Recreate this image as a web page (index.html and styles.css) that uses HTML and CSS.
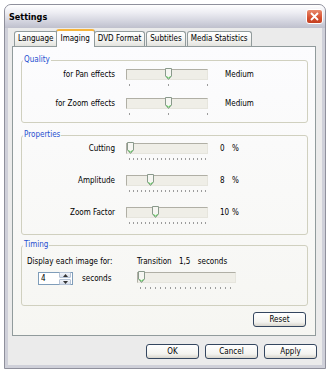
FILE: index.html
```html
<!DOCTYPE html>
<html lang="en">
<head>
<meta charset="UTF-8" />
<meta name="viewport" content="width=device-width, initial-scale=1.0">
<title>Settings</title>
<link rel="stylesheet" href="styles.css">
</head>
<body>
<div class="window">
  <div class="titlebar">
    <span class="title">Settings</span>
    <button class="close" title="Close">
      <svg width="9" height="9" viewBox="0 0 9 9"><path d="M1 1L8 8M8 1L1 8" stroke="#fff" stroke-width="1.8"/></svg>
    </button>
  </div>

  <div class="dialog">
    <div class="tabs">
      <div class="tab">Language</div>
      <div class="tab active">Imaging</div>
      <div class="tab">DVD Format</div>
      <div class="tab">Subtitles</div>
      <div class="tab">Media Statistics</div>
    </div>

    <div class="panel">
      <fieldset class="group quality">
        <legend>Quality</legend>
        <div class="rows">
          <div class="row">
            <span class="lbl">for Pan effects</span>
            <div class="slider">
              <div class="track">
                <svg class="thumb" style="left:38px" width="7" height="12" viewBox="0 0 7 12"><path d="M0.5 0.5H6.5V8L3.5 11.5L0.5 8Z" fill="#f6f6f2" stroke="#8a9a8c"/><path d="M1.5 8.2L3.5 10.3L5.5 8.2" fill="none" stroke="#45c045"/></svg>
              </div>
              <div class="ticks ticks-coarse"></div>
            </div>
            <span class="val val-wide">Medium</span>
          </div>
          <div class="row">
            <span class="lbl">for Zoom effects</span>
            <div class="slider">
              <div class="track">
                <svg class="thumb" style="left:38px" width="7" height="12" viewBox="0 0 7 12"><path d="M0.5 0.5H6.5V8L3.5 11.5L0.5 8Z" fill="#f6f6f2" stroke="#8a9a8c"/><path d="M1.5 8.2L3.5 10.3L5.5 8.2" fill="none" stroke="#45c045"/></svg>
              </div>
              <div class="ticks ticks-coarse"></div>
            </div>
            <span class="val val-wide">Medium</span>
          </div>
        </div>
      </fieldset>

      <fieldset class="group properties">
        <legend>Properties</legend>
        <div class="rows">
          <div class="row">
            <span class="lbl">Cutting</span>
            <div class="slider">
              <div class="track">
                <svg class="thumb" style="left:0px" width="7" height="12" viewBox="0 0 7 12"><path d="M0.5 0.5H6.5V8L3.5 11.5L0.5 8Z" fill="#f6f6f2" stroke="#8a9a8c"/><path d="M1.5 8.2L3.5 10.3L5.5 8.2" fill="none" stroke="#45c045"/></svg>
              </div>
              <div class="ticks ticks-fine"></div>
            </div>
            <span class="val"><span class="num">0</span>%</span>
          </div>
          <div class="row">
            <span class="lbl">Amplitude</span>
            <div class="slider">
              <div class="track">
                <svg class="thumb" style="left:20px" width="7" height="12" viewBox="0 0 7 12"><path d="M0.5 0.5H6.5V8L3.5 11.5L0.5 8Z" fill="#f6f6f2" stroke="#8a9a8c"/><path d="M1.5 8.2L3.5 10.3L5.5 8.2" fill="none" stroke="#45c045"/></svg>
              </div>
              <div class="ticks ticks-fine"></div>
            </div>
            <span class="val"><span class="num">8</span>%</span>
          </div>
          <div class="row">
            <span class="lbl">Zoom Factor</span>
            <div class="slider">
              <div class="track">
                <svg class="thumb" style="left:25px" width="7" height="12" viewBox="0 0 7 12"><path d="M0.5 0.5H6.5V8L3.5 11.5L0.5 8Z" fill="#f6f6f2" stroke="#8a9a8c"/><path d="M1.5 8.2L3.5 10.3L5.5 8.2" fill="none" stroke="#45c045"/></svg>
              </div>
              <div class="ticks ticks-fine"></div>
            </div>
            <span class="val"><span class="num">10</span>%</span>
          </div>
        </div>
      </fieldset>

      <fieldset class="group timing">
        <legend>Timing</legend>
        <div class="timing-grid">
          <span class="line">Display each image for:</span>
          <span class="line">Transition <span class="sp">1,5</span> seconds</span>
          <div class="spin-row">
            <div class="spin">
              <span class="spin-val">4</span>
              <div class="spin-btns">
                <span class="spin-btn"><svg width="5" height="3" viewBox="0 0 5 3"><path d="M0 3L2.5 0L5 3Z" fill="#333"/></svg></span>
                <span class="spin-btn"><svg width="5" height="3" viewBox="0 0 5 3"><path d="M0 0L2.5 3L5 0Z" fill="#333"/></svg></span>
              </div>
            </div>
            <span>seconds</span>
          </div>
          <div class="slider slider-wide">
            <div class="track">
              <svg class="thumb" style="left:0px" width="7" height="12" viewBox="0 0 7 12"><path d="M0.5 0.5H6.5V8L3.5 11.5L0.5 8Z" fill="#f6f6f2" stroke="#8a9a8c"/><path d="M1.5 8.2L3.5 10.3L5.5 8.2" fill="none" stroke="#45c045"/></svg>
            </div>
            <div class="ticks ticks-timing"></div>
          </div>
        </div>
      </fieldset>

      <div class="panel-foot">
        <button class="btn">Reset</button>
      </div>
    </div>

    <div class="actions">
      <button class="btn">OK</button>
      <button class="btn">Cancel</button>
      <button class="btn">Apply</button>
    </div>
  </div>
</div>
</body>
</html>
```

FILE: styles.css
```css
body {
  margin: 0;
  background: #fff;
  font-family: "DejaVu Sans Condensed", "DejaVu Sans", sans-serif;
  font-stretch: condensed;
  font-size: 8px;
  color: #000;
}

.window {
  margin: 4px 0 0 4px;
  width: 322px;
  height: 365px;
  box-sizing: border-box;
  border: 1px solid #8f909c;
  border-radius: 7px 7px 0 0;
  background: #cfd0d9;
  display: flex;
  flex-direction: column;
}

.titlebar {
  height: 23px;
  display: flex;
  align-items: center;
  padding: 0 2px 0 4px;
  border-radius: 6px 6px 0 0;
  background: linear-gradient(#ffffff, #ececf2 35%, #d0d1dc 75%, #bfc0cd);
}

.title {
  flex: 1;
  font-weight: bold;
  font-size: 9px;
}

.close {
  width: 17px;
  height: 15px;
  padding: 0;
  border: 1px solid #fff;
  border-radius: 3px;
  background: linear-gradient(#e98a6d, #d5502f 60%, #c43f20);
  display: flex;
  align-items: center;
  justify-content: center;
}

.dialog {
  flex: 1;
  margin: 0 3px 3px;
  padding: 1px 6px 0 4px;
  background: #ebebeb;
  display: flex;
  flex-direction: column;
}

/* tabs */
.tabs {
  height: 17px;
  display: flex;
  align-items: flex-end;
  padding-left: 2px;
}

.tab {
  height: 15px;
  box-sizing: border-box;
  padding: 0 3px;
  line-height: 13px;
  border: 1px solid #919b9c;
  border-bottom: none;
  border-radius: 3px 3px 0 0;
  background: linear-gradient(#ffffff, #f3f3f0 60%, #e3e3de);
}

.tab + .tab {
  margin-left: 1px;
}

.tab.active {
  position: relative;
  height: 18px;
  margin: 0 -2px -1px;
  padding: 0 4px;
  line-height: 15px;
  border-top: 2px solid #f5b43c;
  background: #fcfcfe;
}

.panel {
  height: 290px;
  box-sizing: border-box;
  padding: 8px 7px 0 8px;
  border: 1px solid #919b9c;
  background: linear-gradient(#fcfcfe, #f6f6f2);
  display: flex;
  flex-direction: column;
}

/* group boxes */
.group {
  margin: 0;
  padding: 4px 6px 7px 5px;
  border: 1px solid #d0d0bf;
  border-radius: 3px;
}

.group legend {
  margin-left: -4px;
  padding: 0 1px;
  line-height: 10px;
  color: #1f4fd0;
}

.properties {
  margin-top: 7px;
  padding-top: 3px;
  padding-bottom: 10px;
}

.timing {
  margin-top: 5px;
  padding-top: 6px;
  padding-bottom: 16px;
}

.rows {
  display: grid;
  row-gap: 12px;
}

.properties .rows {
  row-gap: 15px;
}

.row {
  display: grid;
  grid-template-columns: 88px 82px auto;
  column-gap: 11px;
  align-items: start;
}

.lbl {
  text-align: right;
  line-height: 11px;
}

.val {
  line-height: 11px;
  padding-left: 1px;
}

.val-wide {
  padding-left: 6px;
}

.num {
  display: inline-block;
  width: 12px;
}

/* slider */
.slider {
  display: flex;
  flex-direction: column;
}

.slider-wide {
  width: 99px;
}

.track {
  position: relative;
  height: 11px;
  box-sizing: border-box;
  border: 1px solid;
  border-color: #b0afa5 #e6e5dd #e6e5dd #b0afa5;
  background: #efeee7;
}

.thumb {
  position: absolute;
  top: -2px;
}

.ticks {
  height: 2px;
  margin: 4px 0 0 3px;
}

.ticks-coarse {
  width: 79px;
  background: repeating-linear-gradient(90deg, #9c9c9c 0 1px, transparent 1px 39px);
}

.ticks-fine {
  width: 77px;
  background: repeating-linear-gradient(90deg, #9c9c9c 0 1px, transparent 1px 4px);
}

.ticks-timing {
  width: 91px;
  background: repeating-linear-gradient(90deg, #9c9c9c 0 1px, transparent 1px 5px);
}

/* timing */
.timing-grid {
  display: grid;
  grid-template-columns: 110px auto;
  row-gap: 5px;
  align-items: start;
}

.line {
  line-height: 11px;
}

.sp {
  margin: 0 5px;
}

.spin-row {
  display: flex;
  align-items: center;
  gap: 9px;
  padding-left: 11px;
}

.spin {
  width: 35px;
  height: 13px;
  box-sizing: border-box;
  border: 1px solid #7f9db9;
  background: #fff;
  display: flex;
  align-items: center;
}

.spin-val {
  padding-left: 2px;
  flex: 1;
}

.spin-btns {
  display: flex;
  flex-direction: column;
  gap: 1px;
  padding: 0 1px;
}

.spin-btn {
  width: 10px;
  height: 4px;
  border: 1px solid #b6c3d6;
  border-radius: 1px;
  background: linear-gradient(#f3f5fa, #d6dde9);
  display: flex;
  align-items: center;
  justify-content: center;
}

.spin-btn svg {
  display: block;
}

/* buttons */
.panel-foot {
  display: flex;
  justify-content: flex-end;
  margin-top: 6px;
  padding-right: 2px;
}

.actions {
  display: flex;
  justify-content: flex-end;
  gap: 6px;
  margin-top: 8px;
  margin-right: -1px;
}

.btn {
  width: 53px;
  height: 15px;
  padding: 0;
  font: inherit;
  line-height: 13px;
  color: #000;
  border: 1px solid #34465f;
  border-radius: 3px;
  background: linear-gradient(#ffffff, #f3f3ef 70%, #d8d5cc);
}
```
